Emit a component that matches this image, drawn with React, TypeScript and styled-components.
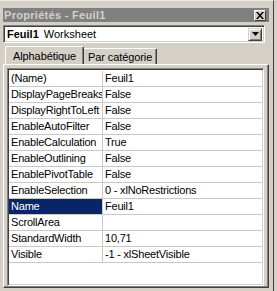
import { FC } from 'react'
import styled, { createGlobalStyle } from 'styled-components'

const GlobalStyle = createGlobalStyle`
  html, body {
    margin: 0;
    padding: 0;
    background: #d4d0c8;
  }
  body {
    font-family: 'Liberation Sans', Arial, sans-serif;
    font-size: 11px;
    color: #000;
  }
  * {
    box-sizing: border-box;
  }
`

const Screen = styled.div`
  width: 277px;
  height: 291px;
  background: #d4d0c8;
  overflow: hidden;
`

const Frame = styled.div`
  width: 274px;
  height: 291px;
  padding: 7px 4px 0 3px;
  border-top: 1px solid #ece9e2;
  border-right: 1px solid #404040;
  display: flex;
  flex-direction: column;
`

const TitleBar = styled.div`
  height: 14px;
  background: #808080;
  display: flex;
  align-items: center;
  justify-content: space-between;
  padding: 0 3px 0 1px;
`

const Title = styled.span`
  color: #d4d0c8;
  font-weight: 700;
  font-size: 11px;
  letter-spacing: 0.3px;
`

const CloseButton = styled.div`
  width: 12px;
  height: 11px;
  background: #d4d0c8;
  border-top: 1px solid #fff;
  border-left: 1px solid #fff;
  border-right: 1px solid #404040;
  border-bottom: 1px solid #404040;
  display: flex;
  align-items: center;
  justify-content: center;
`

const Combo = styled.div`
  margin-top: 3px;
  width: 262px;
  height: 18px;
  background: #fff;
  border-top: 1px solid #808080;
  border-left: 1px solid #808080;
  border-right: 1px solid #fff;
  border-bottom: 1px solid #fff;
  box-shadow: inset 1px 1px 0 #404040, inset -1px -1px 0 #d4d0c8;
  display: flex;
  align-items: center;
  padding: 0 2px 0 3px;
`

const ComboText = styled.div`
  flex: 1;
  display: flex;
  gap: 5px;
  align-items: center;
`

const Strong = styled.span`
  font-weight: 700;
`

const DropButton = styled.div`
  width: 14px;
  height: 13px;
  background: #d4d0c8;
  border-top: 1px solid #d4d0c8;
  border-left: 1px solid #d4d0c8;
  border-right: 1px solid #404040;
  border-bottom: 1px solid #404040;
  box-shadow: inset 1px 1px 0 #fff, inset -1px -1px 0 #808080;
  display: flex;
  align-items: center;
  justify-content: center;
`

const TabStrip = styled.div`
  margin-top: 3px;
  height: 18px;
  display: flex;
  align-items: flex-end;
  padding-left: 2px;
`

const Tab = styled.div<{ $active?: boolean }>`
  height: ${({ $active }) => ($active ? '18px' : '16px')};
  padding: 0 ${({ $active }) => ($active ? '7px' : '4px')};
  margin-right: ${({ $active }) => ($active ? '-1px' : '0')};
  border-top: 1px solid #fff;
  border-left: 1px solid #fff;
  border-right: 1px solid #404040;
  box-shadow: inset -1px 0 0 #808080;
  border-radius: 2px 2px 0 0;
  background: #d4d0c8;
  display: flex;
  align-items: center;
  letter-spacing: -0.1px;
  position: relative;
  z-index: ${({ $active }) => ($active ? 1 : 0)};
`

const Panel = styled.div`
  width: 266px;
  flex: 1;
  margin-bottom: 3px;
  border-top: 1px solid #fff;
  border-left: 1px solid #fff;
  border-right: 1px solid #404040;
  border-bottom: 1px solid #404040;
  box-shadow: inset -1px -1px 0 #808080;
  padding: 3px 4px 1px 3px;
  display: flex;
`

const Grid = styled.div`
  flex: 1;
  background: #fff;
  border-top: 1px solid #808080;
  border-left: 1px solid #808080;
  border-right: 1px solid #fff;
  border-bottom: 1px solid #fff;
  box-shadow: inset 1px 1px 0 #404040, inset -1px -1px 0 #d4d0c8;
  padding: 2px 1px 0 1px;
  letter-spacing: -0.2px;
`

const Row = styled.div`
  height: 16px;
  display: grid;
  grid-template-columns: 94px 1fr;
  border-bottom: 1px solid #c8c8c8;
`

const NameCell = styled.div<{ $selected?: boolean }>`
  padding-left: 2px;
  line-height: 15px;
  white-space: nowrap;
  overflow: hidden;
  border-right: 1px solid #c8c8c8;
  background: ${({ $selected }) => ($selected ? '#0a246a' : 'transparent')};
  color: ${({ $selected }) => ($selected ? '#fff' : '#000')};
`

const ValueCell = styled.div`
  padding-left: 2px;
  line-height: 15px;
  white-space: nowrap;
  overflow: hidden;
`

type Prop = { name: string; value: string; selected?: boolean }

const properties: Prop[] = [
  { name: '(Name)', value: 'Feuil1' },
  { name: 'DisplayPageBreaks', value: 'False' },
  { name: 'DisplayRightToLeft', value: 'False' },
  { name: 'EnableAutoFilter', value: 'False' },
  { name: 'EnableCalculation', value: 'True' },
  { name: 'EnableOutlining', value: 'False' },
  { name: 'EnablePivotTable', value: 'False' },
  { name: 'EnableSelection', value: '0 - xlNoRestrictions' },
  { name: 'Name', value: 'Feuil1', selected: true },
  { name: 'ScrollArea', value: '' },
  { name: 'StandardWidth', value: '10,71' },
  { name: 'Visible', value: '-1 - xlSheetVisible' },
]

const App: FC = () => {
  return (
    <Screen>
      <GlobalStyle />
      <Frame>
        <TitleBar>
          <Title>Propriétés - Feuil1</Title>
          <CloseButton>
            <svg width="8" height="7" viewBox="0 0 8 7">
              <path d="M0 0h2l2 2.5L6 0h2L5 3.5 8 7H6L4 4.5 2 7H0l3-3.5z" fill="#000" />
            </svg>
          </CloseButton>
        </TitleBar>

        <Combo>
          <ComboText>
            <Strong>Feuil1</Strong>
            <span>Worksheet</span>
          </ComboText>
          <DropButton>
            <svg width="7" height="4" viewBox="0 0 7 4">
              <path d="M0 0h7L3.5 4z" fill="#000" />
            </svg>
          </DropButton>
        </Combo>

        <TabStrip>
          <Tab $active>Alphabétique</Tab>
          <Tab>Par catégorie</Tab>
        </TabStrip>

        <Panel>
          <Grid>
            {properties.map((p) => (
              <Row key={p.name}>
                <NameCell $selected={p.selected}>{p.name}</NameCell>
                <ValueCell>{p.value}</ValueCell>
              </Row>
            ))}
          </Grid>
        </Panel>
      </Frame>
    </Screen>
  )
}

export default App
